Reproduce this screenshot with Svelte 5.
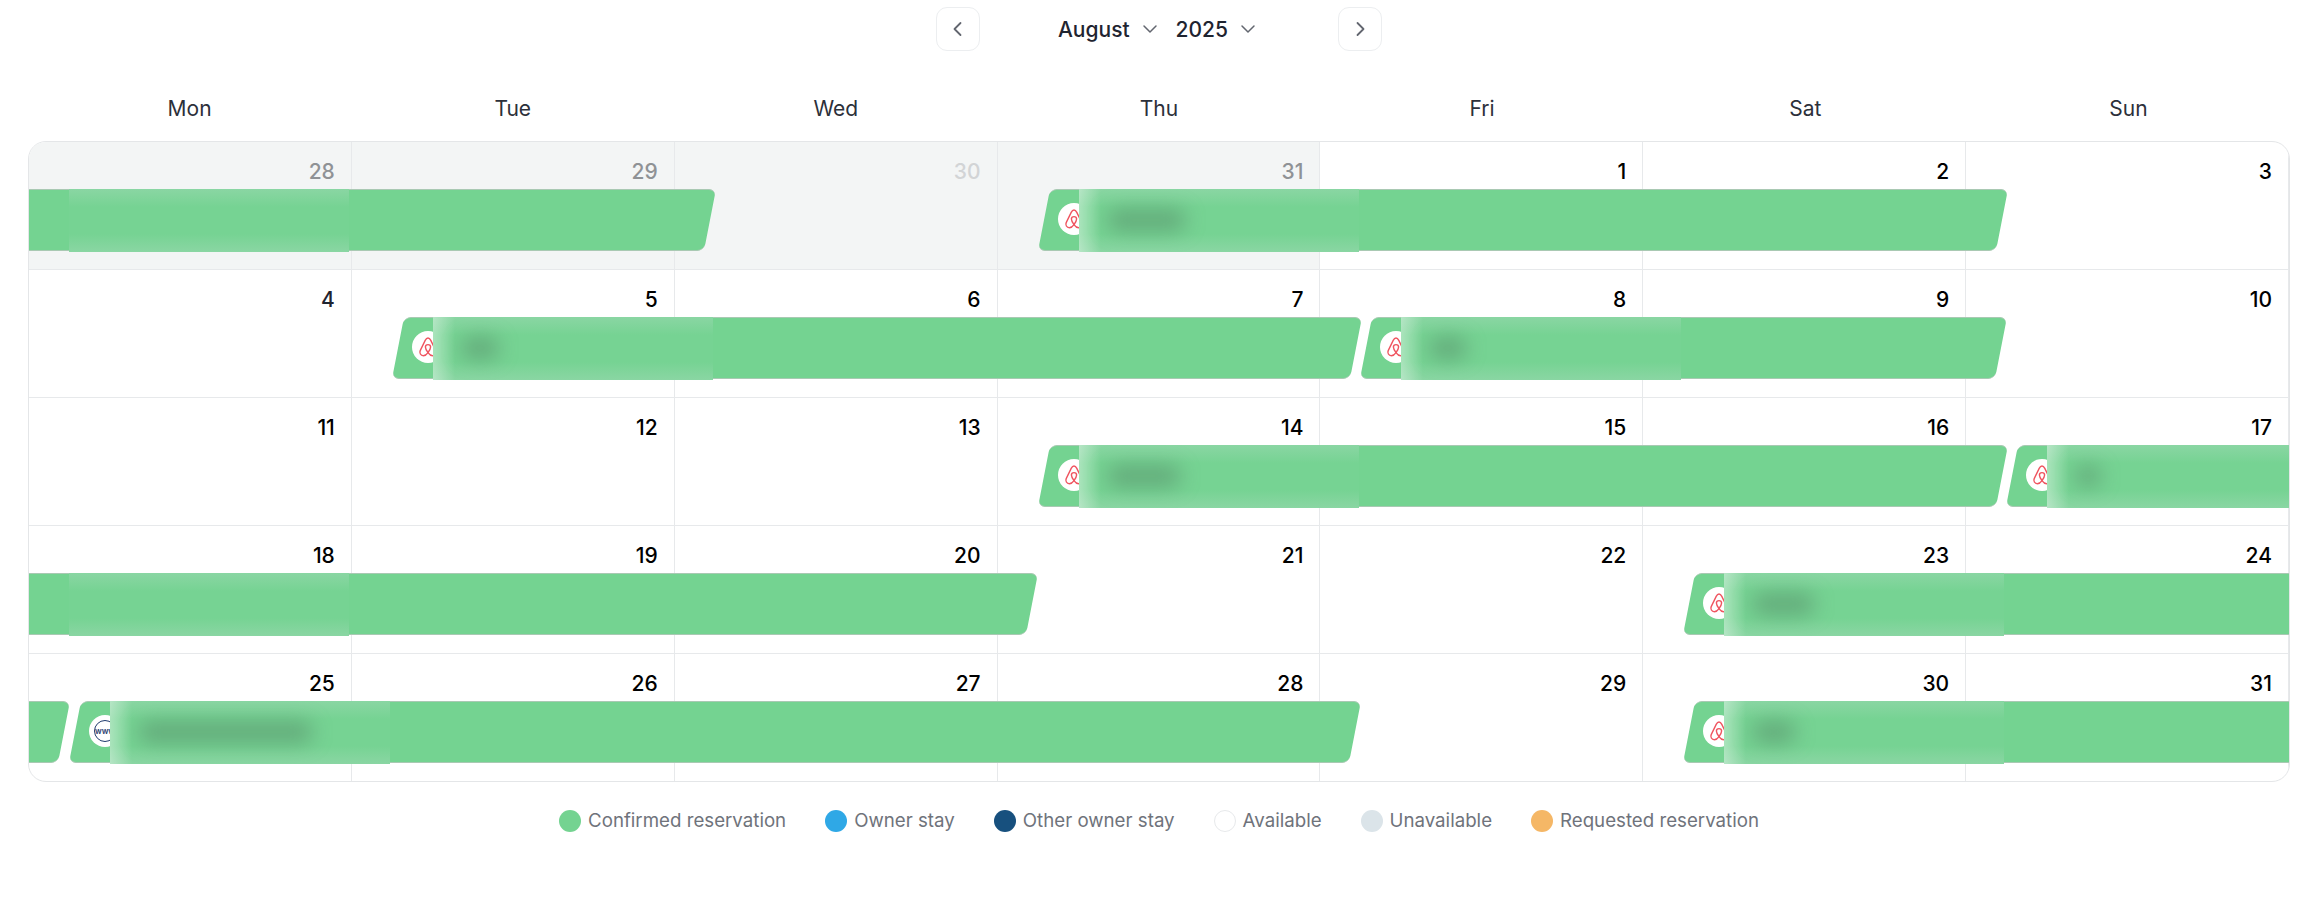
<script>
  const weekdays = ['Mon', 'Tue', 'Wed', 'Thu', 'Fri', 'Sat', 'Sun'];

  // start -1 / end 7 = the stay runs past the edge of the week
  const weeks = [
    {
      days: [[28, 'past'], [29, 'past'], [30, 'faint'], [31, 'past'], [1], [2], [3]],
      bars: [
        { start: -1, end: 2, patch: 0 },
        { start: 3, end: 6, icon: 'airbnb', patch: 3, blob: 87 }
      ]
    },
    {
      days: [[4, 'dim'], [5], [6], [7], [8], [9], [10]],
      bars: [
        { start: 1, end: 4, icon: 'airbnb', patch: 1, blob: 46 },
        { start: 4, end: 6, icon: 'airbnb', patch: 4, blob: 46 }
      ]
    },
    {
      days: [[11], [12], [13], [14], [15], [16], [17]],
      bars: [
        { start: 3, end: 6, icon: 'airbnb', patch: 3, blob: 82 },
        { start: 6, end: 8, icon: 'airbnb', patch: 6, blob: 34 }
      ]
    },
    {
      days: [[18], [19], [20], [21], [22], [23], [24]],
      bars: [
        { start: -1, end: 3, patch: 0 },
        { start: 5, end: 8, icon: 'airbnb', patch: 5, blob: 71 }
      ]
    },
    {
      days: [[25], [26], [27], [28], [29], [30], [31]],
      bars: [
        { start: -1, end: 0 },
        { start: 0, end: 4, icon: 'www', patch: 0, blob: 183 },
        { start: 5, end: 8, icon: 'airbnb', patch: 5, blob: 52 }
      ]
    }
  ];

  const legend = [
    { label: 'Confirmed reservation', color: '#74d391' },
    { label: 'Owner stay', color: '#2fa8e6' },
    { label: 'Other owner stay', color: '#17507e' },
    { label: 'Available', color: '#ffffff', outlined: true },
    { label: 'Unavailable', color: '#dbe4e9' },
    { label: 'Requested reservation', color: '#f5b766' }
  ];

  const col = (n) => `${n} * 100% / 7`;
</script>

<div class="page">
  <nav class="month-nav">
    <button class="arrow" aria-label="Previous month">
      <svg width="20" height="20" viewBox="0 0 20 20" fill="none" stroke="currentColor" stroke-width="1.8" stroke-linecap="round" stroke-linejoin="round">
        <path d="M12.5 4 6.5 10l6 6" />
      </svg>
    </button>
    <div class="selects">
      <button class="select">August
        <svg width="16" height="10" viewBox="0 0 16 10" fill="none" stroke="currentColor" stroke-width="1.5" stroke-linecap="round" stroke-linejoin="round"><path d="M2 2l6 6 6-6" /></svg>
      </button>
      <button class="select">2025
        <svg width="16" height="10" viewBox="0 0 16 10" fill="none" stroke="currentColor" stroke-width="1.5" stroke-linecap="round" stroke-linejoin="round"><path d="M2 2l6 6 6-6" /></svg>
      </button>
    </div>
    <button class="arrow" aria-label="Next month">
      <svg width="20" height="20" viewBox="0 0 20 20" fill="none" stroke="currentColor" stroke-width="1.8" stroke-linecap="round" stroke-linejoin="round">
        <path d="M7.5 4l6 6-6 6" />
      </svg>
    </button>
  </nav>

  <div class="weekdays">
    {#each weekdays as day}
      <div>{day}</div>
    {/each}
  </div>

  <div class="calendar">
    {#each weeks as week}
      <div class="week">
        {#each week.days as [num, tone]}
          <div class="cell {tone ?? ''}"><span>{num}</span></div>
        {/each}

        {#each week.bars as bar}
          <div class="bar" style="left: calc({col(bar.start)} + 46px); right: calc(100% - ({col(bar.end)}) - 35px);">
            <div class="shape"></div>
            {#if bar.icon}
              <div class="logo">
                {#if bar.icon === 'airbnb'}
                  <svg width="24" height="24" viewBox="0 0 24 24" fill="none" stroke="#ef5560" stroke-width="1.4" stroke-linejoin="round">
                    <path d="M12 3C10.8 3 10 3.8 9.2 5.4L4.2 15.6C3.2 17.8 4.6 20.8 7.4 20.8C9.2 20.8 10.6 19.6 12 17.6C13.4 19.6 14.8 20.8 16.6 20.8C19.4 20.8 20.8 17.8 19.8 15.6L14.8 5.4C14 3.8 13.2 3 12 3Z" />
                    <path d="M12 17.6C10.4 15.4 9.4 13.4 9.4 12C9.4 10.4 10.6 9.6 12 9.6C13.4 9.6 14.6 10.4 14.6 12C14.6 13.4 13.6 15.4 12 17.6Z" />
                  </svg>
                {:else}
                  <span class="www">www</span>
                {/if}
              </div>
            {/if}
          </div>
          {#if bar.patch !== undefined}
            <div class="patch" class:lit={bar.icon} style="left: calc({col(bar.patch)} + {bar.start < 0 ? 40 : 81}px);">
              {#if bar.blob}
                <div class="blob" style="width: {bar.blob - 8}px;"></div>
              {/if}
            </div>
          {/if}
        {/each}
      </div>
    {/each}
  </div>

  <div class="legend">
    {#each legend as item}
      <div class="legend-item">
        <span class="dot" class:outlined={item.outlined} style="background: {item.color};"></span>
        {item.label}
      </div>
    {/each}
  </div>
</div>

<style>
  :global(body) {
    margin: 0;
    background: #fff;
  }

  .page {
    padding: 7px 28px 0;
    font-family: Inter, "Liberation Sans", sans-serif;
    color: #1f2430;
  }

  .month-nav {
    display: flex;
    justify-content: center;
    align-items: center;
    height: 44px;
  }

  button {
    font: inherit;
    color: inherit;
    background: none;
    border: none;
    padding: 0;
  }

  .arrow {
    width: 44px;
    height: 44px;
    display: flex;
    align-items: center;
    justify-content: center;
    border: 1px solid #eceef0;
    border-radius: 11px;
    color: #62666f;
  }

  .selects {
    display: flex;
    gap: 18px;
    width: 358px;
    padding-right: 4px;
    box-sizing: border-box;
    justify-content: center;
  }

  .select {
    display: flex;
    align-items: center;
    gap: 12px;
    font-size: 21px;
    font-weight: 500;
  }

  .select svg {
    color: #62666f;
  }

  .weekdays {
    display: grid;
    grid-template-columns: repeat(7, 1fr);
    height: 90px;
    padding-top: 24px;
    box-sizing: border-box;
    align-items: center;
    text-align: center;
    font-size: 21px;
    color: #2c303a;
  }

  .calendar {
    border: 1px solid #e4e6e8;
    border-radius: 18px;
    overflow: hidden;
  }

  .week {
    position: relative;
    display: grid;
    grid-template-columns: repeat(7, 1fr);
    height: 128px;
    border-bottom: 1px solid #e7e9eb;
    box-sizing: border-box;
    overflow: hidden;
  }

  .week:last-child {
    border-bottom: none;
    height: 127px;
  }

  .cell {
    border-right: 1px solid #e7e9eb;
    padding: 18px 16px 0 0;
    text-align: right;
    font-size: 21px;
    line-height: 24px;
    font-weight: 500;
    color: #000;
  }

  .cell:last-child {
    border-right: none;
  }

  .cell.past {
    background: #f3f5f5;
    color: #8f9295;
  }

  .cell.faint {
    background: #f3f5f5;
    color: #d2d4d6;
  }

  .cell.dim {
    color: #1f2430;
  }

  .bar {
    position: absolute;
    top: 47px;
    height: 62px;
  }

  .shape {
    position: absolute;
    inset: 0;
    background: #74d391;
    border-top: 1px solid #a9c9b3;
    border-bottom: 1px solid #a9c9b3;
    box-sizing: border-box;
    border-radius: 7px;
    transform: skewX(-11deg);
  }

  .logo {
    position: absolute;
    left: 14px;
    top: 14px;
    width: 32px;
    height: 32px;
    border-radius: 50%;
    background: #fff;
    display: flex;
    align-items: center;
    justify-content: center;
  }

  .www {
    width: 22px;
    height: 22px;
    box-sizing: border-box;
    border: 1.5px solid #1f3a6e;
    border-radius: 50%;
    display: flex;
    align-items: center;
    justify-content: center;
    color: #1f3a6e;
    font-size: 8px;
    font-weight: 600;
  }

  .patch {
    position: absolute;
    top: 47px;
    width: 280px;
    height: 63px;
    background: linear-gradient(180deg, #8ad6a3, #76d393 18px, #76d393 45px, #8ad6a3);
    overflow: hidden;
  }

  .patch.lit {
    background:
      linear-gradient(90deg, rgba(255, 255, 255, 0.38), rgba(255, 255, 255, 0) 22px),
      linear-gradient(180deg, #8ad6a3, #76d393 18px, #76d393 45px, #8ad6a3);
  }

  .blob {
    position: absolute;
    left: 28px;
    top: 20px;
    height: 22px;
    border-radius: 11px;
    background: rgba(70, 110, 85, 0.4);
    filter: blur(10px);
  }

  .legend {
    display: flex;
    justify-content: center;
    gap: 39px;
    margin-top: 27px;
    font-size: 18.7px;
    color: #6f737b;
  }

  .legend-item {
    display: flex;
    align-items: center;
    gap: 7px;
  }

  .dot {
    width: 22px;
    height: 22px;
    border-radius: 50%;
    box-sizing: border-box;
  }

  .dot.outlined {
    border: 1px solid #e7e9eb;
  }
</style>
